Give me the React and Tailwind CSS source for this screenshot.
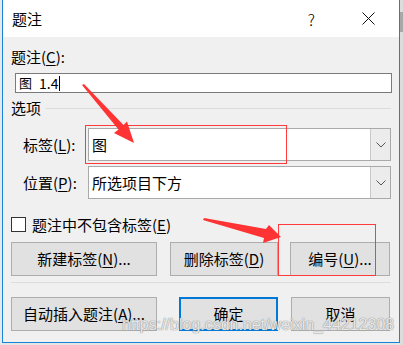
import React from "react";

const font = { fontFamily: '"Noto Sans CJK SC", "Microsoft YaHei", sans-serif' };

function U({ children }) {
  return <span className="underline underline-offset-2 decoration-1">{children}</span>;
}

function Combo({ value }) {
  return (
    <div className="flex h-[33px] w-[303px] border border-[#a9a9a9] bg-white">
      <div className="flex flex-1 items-center pl-[3px] text-[15px] leading-[18px] text-black">{value}</div>
      <div className="flex w-[20px] items-center justify-center border-l border-[#c8c8c8] bg-[#ececec]">
        <svg width="10" height="6" viewBox="0 0 10 6">
          <polyline points="0.5,0.5 5,5 9.5,0.5" fill="none" stroke="#555" strokeWidth="1" />
        </svg>
      </div>
    </div>
  );
}

function Btn({ w, children, primary }) {
  return (
    <div
      className={
        "flex h-[34px] items-center justify-center bg-[#e1e1e1] text-[15px] leading-[18px] text-black " +
        (primary ? "border-2 border-[#0078d7]" : "border border-[#adadad]")
      }
      style={{ width: w }}
    >
      {children}
    </div>
  );
}

export default function App() {
  return (
    <div className="relative flex h-[345px] w-[403px] overflow-hidden bg-[#e4e4e4]" style={font}>
      {/* left sliver */}
      <div className="h-full w-[2px] bg-[#e8e8e8]" />

      {/* dialog */}
      <div className="flex h-[343px] w-[398px] flex-col border-x border-b border-[#1883d7] bg-[#f0f0f0]">
        {/* title bar */}
        <div className="flex h-[37px] items-center bg-white pl-[9px] text-[15px] leading-[18px] text-black">
          <span className="flex-1">题注</span>
          <span className="mr-[47px] text-[16px] font-light">?</span>
          <svg width="13" height="13" viewBox="0 0 13 13" className="mr-[24px]">
            <path d="M0.5 0.5 L12.5 12.5 M12.5 0.5 L0.5 12.5" stroke="#111" strokeWidth="1" />
          </svg>
        </div>

        <div className="flex flex-col pl-[8px] pr-[8px]">
          <div className="mt-[11px] h-[18px] text-[15px] leading-[18px] text-black">
            题注(<U>C</U>):
          </div>
          <div className="ml-[4px] mt-[7px] flex h-[20px] w-[377px] items-center border border-[#7a7a7a] bg-white pl-[3px] text-[13px] leading-[16px] text-black">
            <span>图</span>
            <span className="ml-[7px] text-[14px]">1.4</span>
            <span className="ml-[1px] h-[15px] w-px bg-black" />
          </div>

          <div className="mt-[6px] flex h-[18px] items-center text-[15px] leading-[18px] text-black">
            <span>选项</span>
            <span className="ml-[5px] h-px flex-1 bg-[#dcdcdc]" />
          </div>

          <div className="mt-[11px] flex items-center">
            <span className="ml-[12px] w-[65px] text-[15px] leading-[18px] text-black">
              标签(<U>L</U>):
            </span>
            <Combo value="图" />
          </div>
          <div className="mt-[5px] flex items-center">
            <span className="ml-[12px] w-[65px] text-[15px] leading-[18px] text-black">
              位置(<U>P</U>):
            </span>
            <Combo value="所选项目下方" />
          </div>

          <div className="mt-[18px] flex h-[15px] items-center">
            <span className="h-[15px] w-[15px] border border-[#333] bg-white" />
            <span className="ml-[6px] text-[15px] leading-[18px] text-black">
              题注中不包含标签(<U>E</U>)
            </span>
          </div>

          <div className="mt-[10px] flex">
            <Btn w={146}>新建标签(<U>N</U>)...</Btn>
            <div className="ml-[13px]">
              <Btn w={108}>删除标签(<U>D</U>)</Btn>
            </div>
            <div className="ml-[12px]">
              <Btn w={100}>编号(<U>U</U>)...</Btn>
            </div>
          </div>

          <div className="mt-[6px] h-px w-[380px] bg-[#dcdcdc]" />

          <div className="mt-[14px] flex">
            <Btn w={146}>自动插入题注(<U>A</U>)...</Btn>
            <div className="ml-[22px]">
              <Btn w={99} primary>确定</Btn>
            </div>
            <div className="ml-[13px]">
              <Btn w={99}>取消</Btn>
            </div>
          </div>
        </div>
      </div>

      {/* right sliver */}
      <div className="flex h-full w-[3px] flex-col bg-[#dcdcdc]">
        <div className="mt-[12px] h-[20px] bg-[#a8a8a8]" />
      </div>

      {/* annotations */}
      <div className="pointer-events-none absolute left-[85px] top-[125px] h-[39px] w-[202px] border border-[#ff3b3b]" />
      <div className="pointer-events-none absolute left-[278px] top-[224px] h-[52px] w-[98px] border border-[#ff3b3b]" />

      <svg className="pointer-events-none absolute left-0 top-0" width="403" height="345" viewBox="0 0 403 345">
        <polygon
          points="82,85 84,84 123.5,125 127,121.5 134,143 114,133 118.5,129.5"
          fill="#f33"
        />
        <polygon
          points="203,220 204,218 266,229 269,225 281,237 263,243 264,238"
          fill="#f33"
        />
      </svg>

      <div className="pointer-events-none absolute left-[122px] top-[315px] text-[16px] leading-[20px] text-white/80 [text-shadow:0_0_1px_#888,0_0_1px_#888]" style={{ fontFamily: '"Liberation Sans", Arial, sans-serif' }}>
        https://blog.csdn.net/weixin_44212308
      </div>
    </div>
  );
}
